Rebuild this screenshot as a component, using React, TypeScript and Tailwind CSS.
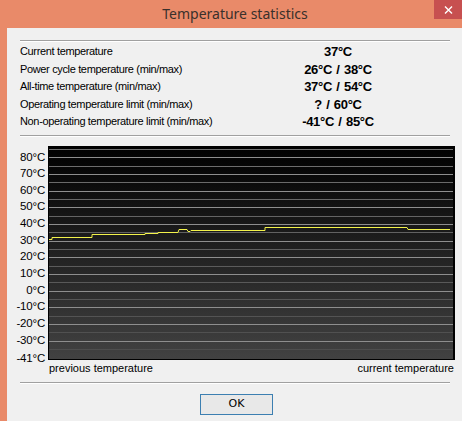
import React from 'react';

const rows: [string, string][] = [
  ['Current temperature', '37°C'],
  ['Power cycle temperature (min/max)', '26°C / 38°C'],
  ['All-time temperature (min/max)', '37°C / 54°C'],
  ['Operating temperature limit (min/max)', '? / 60°C'],
  ['Non-operating temperature limit (min/max)', '-41°C / 85°C'],
];

const axis = ['80°C', '70°C', '60°C', '50°C', '40°C', '30°C', '20°C', '10°C', '0°C', '-10°C', '-20°C', '-30°C'];

// chart is 407 x 214, 10°C = 16.667px, 80°C at y=11.3
const W = 407;
const H = 214;
const step = 16.667;

const history = [
  [1, 93.5], [4, 93.5], [4, 91.5], [44, 91.5], [44, 88.5], [97, 88.5], [97, 87.5],
  [110, 87.5], [110, 86.5], [130, 86.5], [131, 83.5], [139, 83.5], [140, 85.5],
  [142, 85.5], [143, 84.5], [217, 84.5], [217, 81.5], [359, 81.5], [360, 83.5], [402, 83.5],
];

function Separator({ className = '' }: { className?: string }) {
  return <div className={`ml-[13px] mr-[12px] border-t border-t-[#A0A0A0] border-b border-b-white ${className}`} />;
}

function Chart() {
  const major = Array.from({ length: 12 }, (_, i) => Math.round(11.3 + i * step) + 0.5);
  const minor = Array.from({ length: 13 }, (_, i) => Math.round(3 + i * step) + 0.5);
  return (
    <svg width={W} height={H} className="block shrink-0">
      <defs>
        <linearGradient id="bg" x1="0" y1="0" x2="0" y2="1">
          <stop offset="0" stopColor="#000000" />
          <stop offset="1" stopColor="#424242" />
        </linearGradient>
        <linearGradient id="minor" gradientUnits="userSpaceOnUse" x1="0" y1="0" x2="0" y2={H}>
          <stop offset="0" stopColor="#707070" />
          <stop offset="1" stopColor="#4c4c4c" />
        </linearGradient>
      </defs>
      <rect x="0" y="0" width={W} height={H} fill="url(#bg)" />
      {minor.map((y) => (
        <line key={'m' + y} x1="1" x2={W - 2} y1={y} y2={y} stroke="url(#minor)" strokeWidth="1" shapeRendering="crispEdges" />
      ))}
      {major.map((y) => (
        <line key={'M' + y} x1="1" x2={W - 2} y1={y} y2={y} stroke="#8e8e8e" strokeWidth="1" shapeRendering="crispEdges" />
      ))}
      <polyline
        points={history.map(([x, y]) => `${x},${y}`).join(' ')}
        fill="none"
        stroke="#F2F24A"
        strokeWidth="1"
      />
      <rect x="0.5" y="0.5" width={W - 1} height={H - 1} fill="none" stroke="#000" strokeWidth="1" />
      <line x1={W - 1} x2={W - 1} y1="0" y2={H} stroke="#000" strokeWidth="2" />
    </svg>
  );
}

export default function App() {
  return (
    <div className="w-[462px] h-[421px] bg-[#E98A69] flex flex-col overflow-hidden">
      <div className="relative h-[28px] shrink-0 flex items-center justify-center pl-[8px]">
        <span className="font-['Noto_Sans',sans-serif] text-[14px] text-[#3a302b] leading-none">Temperature statistics</span>
        <div className="absolute right-0 top-0 w-[28px] h-[19px] bg-[#C75050] flex items-center justify-center">
          <svg width="9" height="8" viewBox="0 0 9 8">
            <path d="M1 0.5 L8 7.5 M8 0.5 L1 7.5" stroke="#fff" strokeWidth="1.4" />
          </svg>
        </div>
      </div>

      <div className="flex-1 ml-[7px] bg-[#F0F0F0] flex flex-col pt-[12px] font-['Liberation_Sans',Arial,sans-serif] text-[11px] text-black">
        <Separator />
        <div className="ml-[13px] mt-[1px] grid grid-cols-[250px_136px]">
          {rows.map(([label, value]) => (
            <React.Fragment key={label}>
              <div className="h-[17.5px] leading-[17.5px] tracking-[-0.35px] whitespace-nowrap">{label}</div>
              <div className="h-[17.5px] leading-[17.5px] text-center font-bold text-[13px] tracking-[-0.3px] [word-spacing:1px]">{value}</div>
            </React.Fragment>
          ))}
        </div>
        <Separator className="mt-[4px]" />

        <div className="mt-[9px] flex gap-[3px]">
          <div className="w-[38px] h-[214px] pt-[3px] flex flex-col items-end text-[11.5px] tracking-[-0.2px]">
            {axis.map((a) => (
              <div key={a} className="h-[16.667px] leading-[16.667px] shrink-0">{a}</div>
            ))}
            <div className="mt-[1.7px] h-[16.667px] leading-[16.667px] shrink-0">-41°C</div>
          </div>
          <Chart />
        </div>
        <div className="mt-[2px] pl-[42px] pr-[8px] flex justify-between leading-[13px] text-[11px]">
          <span>previous temperature</span>
          <span>current temperature</span>
        </div>

        <Separator className="mt-[7px]" />
        <div className="mt-[10px] ml-[193px] w-[73px] h-[21px] border border-[#3C7FB1] bg-[#E8E8E8] flex items-center justify-center text-[11px] font-['DejaVu_Sans',sans-serif]">
          OK
        </div>
      </div>
    </div>
  );
}
